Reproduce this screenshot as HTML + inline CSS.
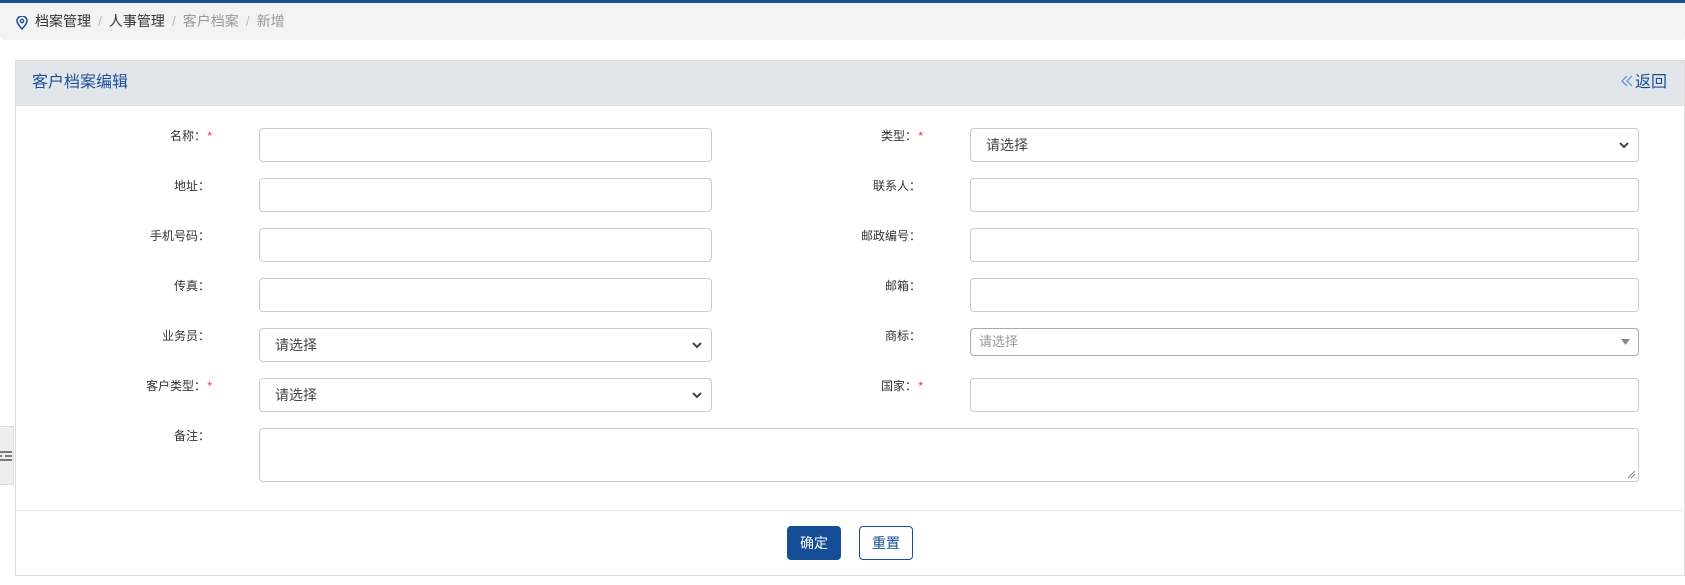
<!DOCTYPE html>
<html><head><meta charset="utf-8"><style>
*{box-sizing:border-box;margin:0;padding:0}
body{width:1685px;height:585px;background:#fff;font-family:"Liberation Sans","Noto Sans CJK SC",sans-serif;position:relative;overflow:hidden;color:#333}
.top{position:absolute;left:0;top:0;width:1685px;height:3px;background:#1a4f98}
.bc{position:absolute;left:0;top:3px;width:1685px;height:37px;background:#f3f3f3;border-radius:0 0 4px 4px;font-size:14px;line-height:37px;padding-left:35px}
.bc .sep{color:#bbb;margin:0 7px}
.bc .g{color:#999}
.pin{position:absolute;left:16px;top:13px}
.panel{position:absolute;left:15px;top:60px;width:1670px;height:516px;border:1px solid #ddd}
.hd{height:45px;background:#e2e5ea;border-bottom:1px solid #ddd;color:#1a4f98;font-size:16px;line-height:44px;padding-left:16px}
.ret{position:absolute;right:17px;top:0;font-size:16px;line-height:44px;color:#1a4f98}
.lab{position:absolute;font-size:12px;text-align:right;width:126px;line-height:16px}
.st{color:#e33;position:absolute;right:-6px;top:0}
.lab.s{width:122px}
.in{position:absolute;border:1px solid #ccc;border-radius:4px;height:34px;background:#fff;font-size:14px;line-height:32px;padding-left:15px;color:#444}
.chev{position:absolute;right:8px;top:12px}
.foot{position:absolute;left:15px;top:510px;width:1670px;border-top:1px solid #e8e8e8}
.btn{position:absolute;top:526px;width:54px;height:34px;border-radius:4px;font-size:14px;line-height:32px;text-align:center}
.tab{position:absolute;left:0;top:426px;width:14px;height:59px;background:#eee;border:1px solid #ddd;border-left:none}
</style></head><body>
<div class="top"></div>
<div class="bc"><svg class="pin" width="12" height="14" viewBox="0 0 12 14"><path d="M6 13C2.5 9 1 7 1 5a5 5 0 0 1 10 0c0 2-1.5 4-5 8z" fill="none" stroke="#1a4f98" stroke-width="1.5"/><circle cx="6" cy="5" r="1.7" fill="none" stroke="#1a4f98" stroke-width="1.3"/></svg>档案管理<span class="sep">/</span>人事管理<span class="sep">/</span><span class="g">客户档案</span><span class="sep">/</span><span class="g">新增</span></div>
<div class="panel"><div class="hd">客户档案编辑<div class="ret"><svg width="14" height="14" viewBox="0 0 14 14" style="vertical-align:-1px;margin-right:1px"><path d="M7 2L2 7l5 5M12 2L7 7l5 5" fill="none" stroke="#6b9be8" stroke-width="1.4"/></svg>返回</div></div></div>

<div class="lab s" style="left:84px;top:128px">名称：<span class="st">*</span></div>
<div class="in" style="left:259px;top:128px;width:453px"></div>
<div class="lab" style="left:84px;top:178px">地址：</div>
<div class="in" style="left:259px;top:178px;width:453px"></div>
<div class="lab" style="left:84px;top:228px">手机号码：</div>
<div class="in" style="left:259px;top:228px;width:453px"></div>
<div class="lab" style="left:84px;top:278px">传真：</div>
<div class="in" style="left:259px;top:278px;width:453px"></div>
<div class="lab" style="left:84px;top:328px">业务员：</div>
<div class="in" style="left:259px;top:328px;width:453px">请选择<svg class="chev" width="12" height="8" viewBox="0 0 12 8"><path d="M2 2l4 4 4-4" fill="none" stroke="#444" stroke-width="2"/></svg></div>
<div class="lab s" style="left:84px;top:378px">客户类型：<span class="st">*</span></div>
<div class="in" style="left:259px;top:378px;width:453px">请选择<svg class="chev" width="12" height="8" viewBox="0 0 12 8"><path d="M2 2l4 4 4-4" fill="none" stroke="#444" stroke-width="2"/></svg></div>
<div class="lab" style="left:84px;top:428px">备注：</div>
<div class="in" style="left:259px;top:428px;width:1380px;height:54px"><svg style="position:absolute;right:2px;bottom:2px" width="9" height="9"><path d="M1 8L8 1M4 8L8 4" stroke="#888"/></svg></div>

<div class="lab s" style="left:795px;top:128px">类型：<span class="st">*</span></div>
<div class="in" style="left:970px;top:128px;width:669px">请选择<svg class="chev" width="12" height="8" viewBox="0 0 12 8"><path d="M2 2l4 4 4-4" fill="none" stroke="#444" stroke-width="2"/></svg></div>
<div class="lab" style="left:795px;top:178px">联系人：</div>
<div class="in" style="left:970px;top:178px;width:669px"></div>
<div class="lab" style="left:795px;top:228px">邮政编号：</div>
<div class="in" style="left:970px;top:228px;width:669px"></div>
<div class="lab" style="left:795px;top:278px">邮箱：</div>
<div class="in" style="left:970px;top:278px;width:669px"></div>
<div class="lab" style="left:795px;top:328px">商标：</div>
<div class="in" style="left:970px;top:328px;width:669px;height:28px;line-height:26px;padding-left:8px;font-size:13px;color:#999;border-color:#aaa">请选择<svg style="position:absolute;right:8px;top:10px" width="9" height="6"><path d="M0 0h9L4.5 6z" fill="#888"/></svg></div>
<div class="lab s" style="left:795px;top:378px">国家：<span class="st">*</span></div>
<div class="in" style="left:970px;top:378px;width:669px"></div>

<div class="foot"></div>
<div class="btn" style="left:787px;background:#154d96;color:#fff;border:1px solid #154d96">确定</div>
<div class="btn" style="left:859px;background:#fff;color:#154d96;border:1px solid #154d96">重置</div>
<div class="tab"><svg style="position:absolute;left:0;top:22px" width="12" height="14"><path d="M0 3h12M5 7h7M0 11h12M0 7h2" stroke="#555" stroke-width="1.5"/></svg></div>
</body></html>
